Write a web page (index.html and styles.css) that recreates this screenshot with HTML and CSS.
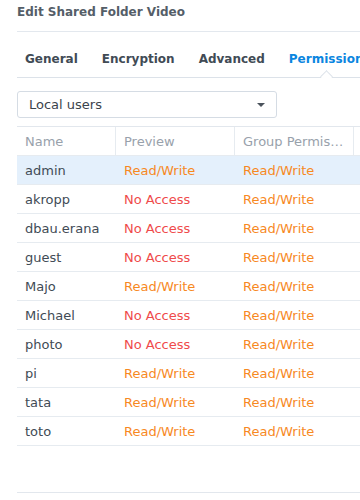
FILE: index.html
```
<!DOCTYPE html>
<html>
<head>
<meta charset="utf-8">
<link rel="stylesheet" href="styles.css">
</head>
<body>
<div class="window">
  <div class="title">Edit Shared Folder Video</div>
  <div class="tabs">
    <div class="tab">General</div>
    <div class="tab">Encryption</div>
    <div class="tab">Advanced</div>
    <div class="tab active">Permissions</div>
  </div>
  <div class="select">
    <span class="select-text">Local users</span>
    <span class="caret"></span>
  </div>
  <div class="grid">
    <div class="row head">
      <div class="cell">Name</div>
      <div class="cell">Preview</div>
      <div class="cell">Group Permissions</div>
      <div class="cell"></div>
    </div>
    <div class="row selected">
      <div class="cell name">admin</div>
      <div class="cell rw">Read/Write</div>
      <div class="cell rw">Read/Write</div>
      <div class="cell"></div>
    </div>
    <div class="row">
      <div class="cell name">akropp</div>
      <div class="cell na">No Access</div>
      <div class="cell rw">Read/Write</div>
      <div class="cell"></div>
    </div>
    <div class="row">
      <div class="cell name">dbau.erana</div>
      <div class="cell na">No Access</div>
      <div class="cell rw">Read/Write</div>
      <div class="cell"></div>
    </div>
    <div class="row">
      <div class="cell name">guest</div>
      <div class="cell na">No Access</div>
      <div class="cell rw">Read/Write</div>
      <div class="cell"></div>
    </div>
    <div class="row">
      <div class="cell name">Majo</div>
      <div class="cell rw">Read/Write</div>
      <div class="cell rw">Read/Write</div>
      <div class="cell"></div>
    </div>
    <div class="row">
      <div class="cell name">Michael</div>
      <div class="cell na">No Access</div>
      <div class="cell rw">Read/Write</div>
      <div class="cell"></div>
    </div>
    <div class="row">
      <div class="cell name">photo</div>
      <div class="cell na">No Access</div>
      <div class="cell rw">Read/Write</div>
      <div class="cell"></div>
    </div>
    <div class="row">
      <div class="cell name">pi</div>
      <div class="cell rw">Read/Write</div>
      <div class="cell rw">Read/Write</div>
      <div class="cell"></div>
    </div>
    <div class="row">
      <div class="cell name">tata</div>
      <div class="cell rw">Read/Write</div>
      <div class="cell rw">Read/Write</div>
      <div class="cell"></div>
    </div>
    <div class="row">
      <div class="cell name">toto</div>
      <div class="cell rw">Read/Write</div>
      <div class="cell rw">Read/Write</div>
      <div class="cell"></div>
    </div>
  </div>
</div>
</body>
</html>
```
FILE: styles.css
```
html, body {
  margin: 0;
  padding: 0;
  background: #ffffff;
}
body {
  font-family: "DejaVu Sans", Verdana, sans-serif;
  width: 360px;
  height: 500px;
  overflow: hidden;
}
.window {
  width: 360px;
  overflow: hidden;
}
.title {
  margin-left: 17px;
  padding-top: 4px;
  padding-bottom: 11px;
  line-height: 16px;
  font-size: 12px;
  font-weight: bold;
  color: #555e68;
  border-bottom: 1px solid #e3e8ee;
  white-space: nowrap;
}
.tabs {
  display: flex;
  gap: 24px;
  margin-left: 17px;
  padding-left: 8px;
  padding-top: 19px;
  padding-bottom: 10px;
  border-bottom: 1px solid #dce2e9;
  white-space: nowrap;
  width: 500px;
}
.tab {
  position: relative;
  font-size: 12px;
  font-weight: bold;
  line-height: 16px;
  color: #414b55;
}
.tab.active {
  color: #0b86e0;
}
.tab.active::after {
  content: "";
  position: absolute;
  left: 33px;
  bottom: -14px;
  width: 8px;
  height: 8px;
  background: #ffffff;
  border-left: 1px solid #dce2e9;
  border-top: 1px solid #dce2e9;
  transform: rotate(45deg);
}
.select {
  display: flex;
  align-items: center;
  justify-content: space-between;
  box-sizing: border-box;
  margin: 13px 0 0 17px;
  width: 260px;
  height: 27px;
  padding: 0 10px 0 11px;
  border: 1px solid #d5dce4;
  border-radius: 3px;
  font-size: 13px;
  color: #3a434c;
}
.caret {
  width: 0;
  height: 0;
  border-left: 4.5px solid transparent;
  border-right: 4.5px solid transparent;
  border-top: 4.5px solid #4b535c;
  margin-right: 1px;
}
.grid {
  box-sizing: border-box;
  margin: 8px 0 0 17px;
  width: 420px;
  height: 367px;
  border-top: 1px solid #e2e7ed;
  border-bottom: 1px solid #e2e7ed;
}
.row {
  display: grid;
  grid-template-columns: 99px 119px 119px 1fr;
  height: 29px;
  box-sizing: border-box;
  border-bottom: 1px solid #e6ebf0;
  font-size: 13px;
}
.row.selected {
  background: #e4f0fc;
}
.cell {
  padding: 2px 8px 0 8px;
  line-height: 26px;
  white-space: nowrap;
  overflow: hidden;
  text-overflow: ellipsis;
}
.head .cell {
  color: #98a1ab;
  border-right: 1px solid #e6ebf0;
}
.name {
  color: #414b55;
}
.rw {
  color: #f7891f;
}
.na {
  color: #ef4b4b;
}
```
